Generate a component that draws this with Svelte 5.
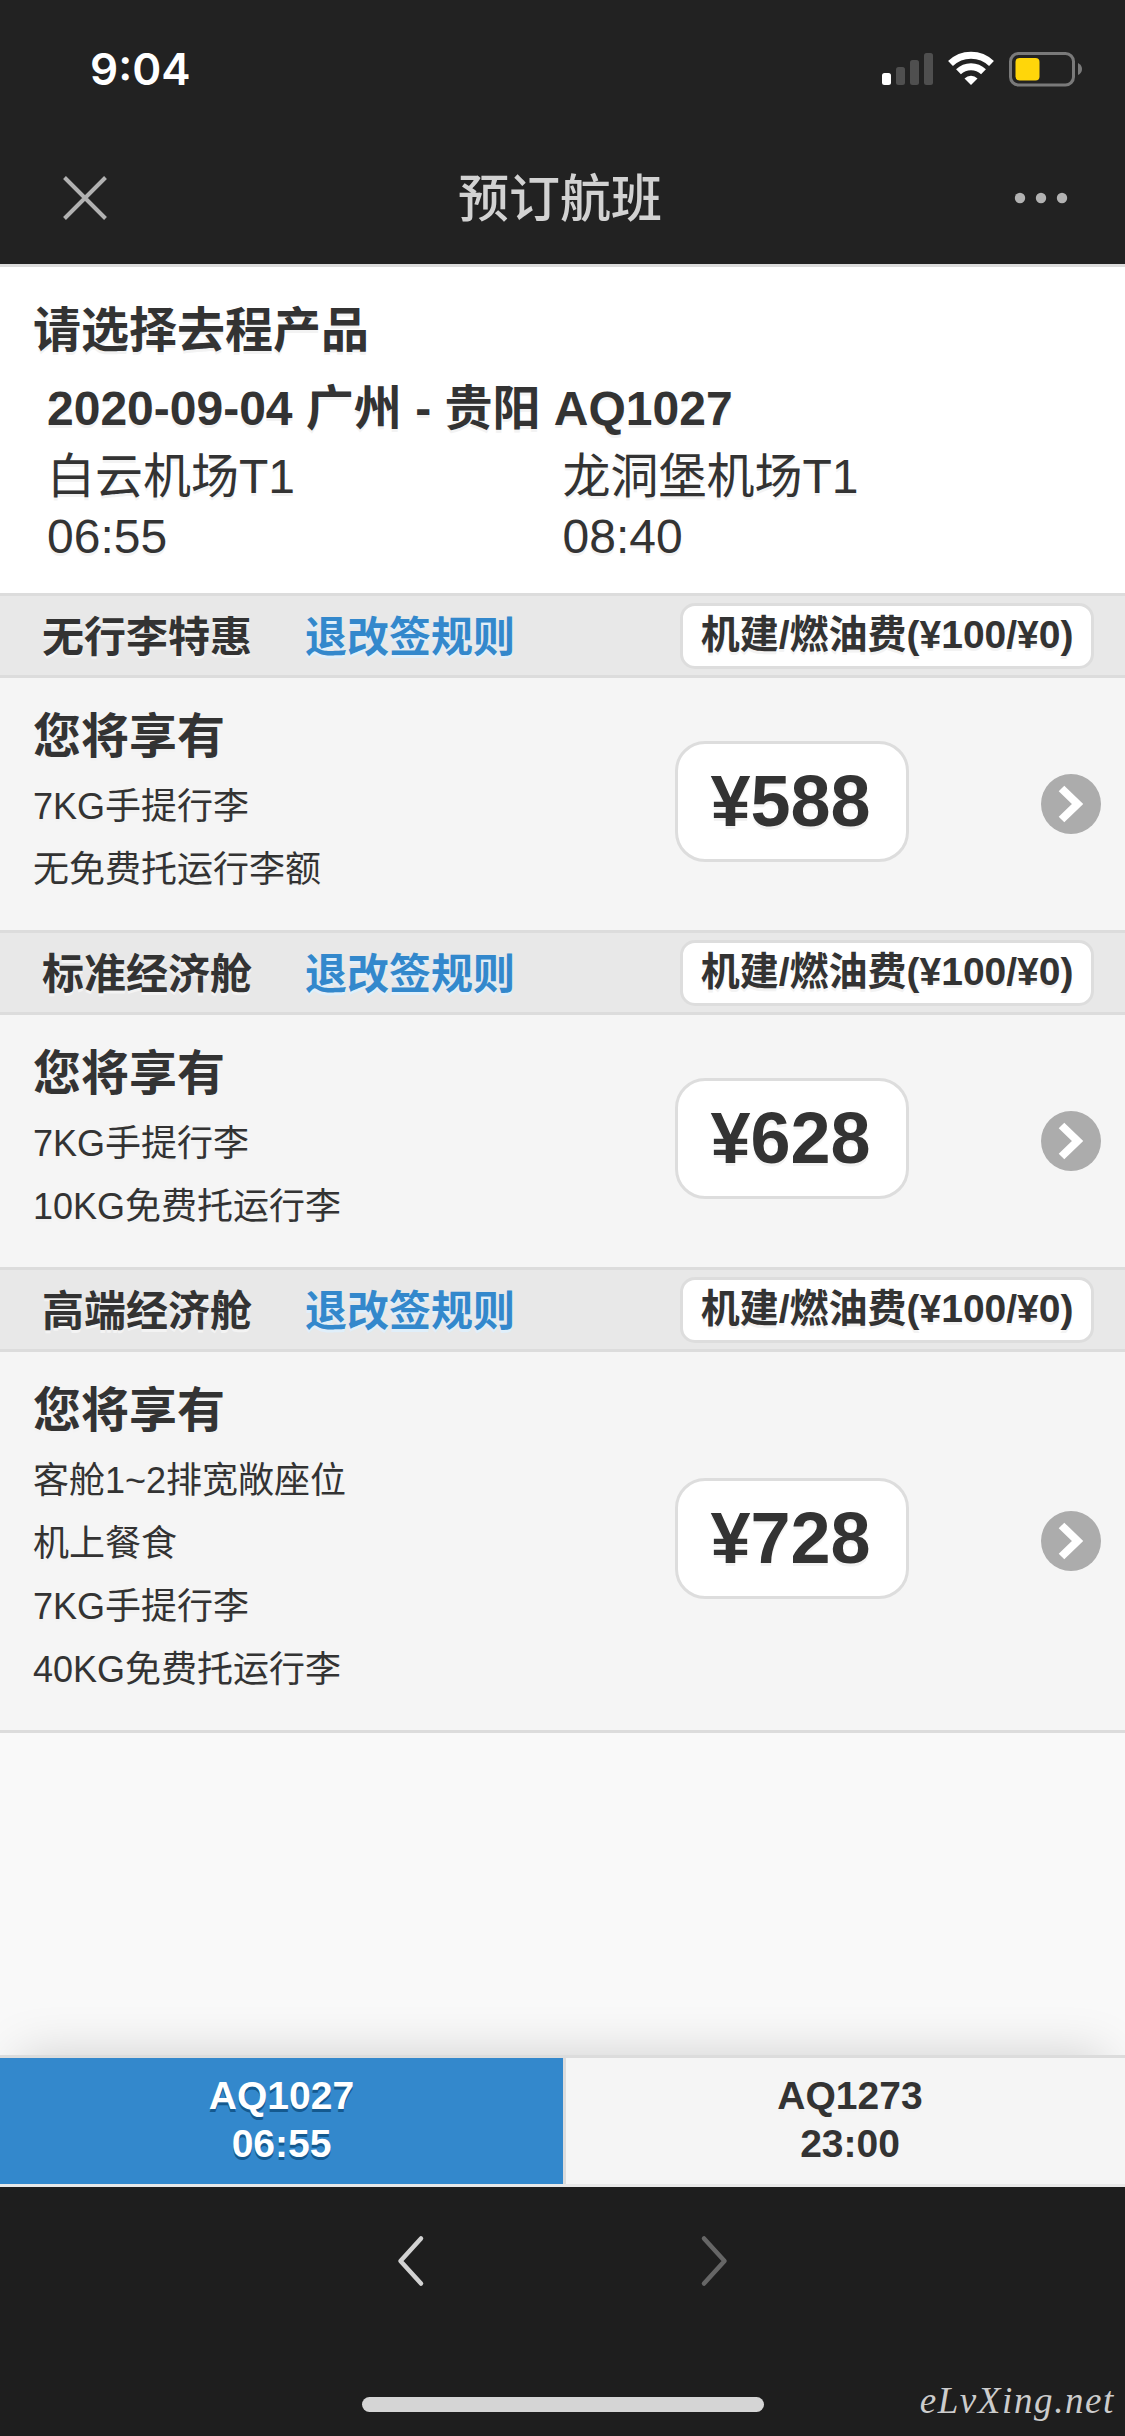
<script lang="ts">
  interface Product {
    name: string;
    price: number;
    benefits: string[];
  }

  const products: Product[] = [
    { name: "无行李特惠", price: 588, benefits: ["7KG手提行李", "无免费托运行李额"] },
    { name: "标准经济舱", price: 628, benefits: ["7KG手提行李", "10KG免费托运行李"] },
    {
      name: "高端经济舱",
      price: 728,
      benefits: ["客舱1~2排宽敞座位", "机上餐食", "7KG手提行李", "40KG免费托运行李"],
    },
  ];

  const stops = [
    { airport: "白云机场T1", time: "06:55" },
    { airport: "龙洞堡机场T1", time: "08:40" },
  ];

  const flights = [
    { no: "AQ1027", time: "06:55" },
    { no: "AQ1273", time: "23:00" },
  ];

  let selected = $state("AQ1027");
</script>

<div class="screen">
  <header>
    <div class="status">
      <span class="clock">9:04</span>
      <svg class="indicators" width="204" height="40" viewBox="0 0 204 40">
        <rect x="1" y="23" width="9" height="12" rx="2.5" fill="#fff" />
        <g fill="#4f4f4f">
          <rect x="15" y="17" width="9" height="18" rx="2.5" />
          <rect x="29" y="10" width="9" height="25" rx="2.5" />
          <rect x="43" y="3" width="9" height="32" rx="2.5" />
        </g>
        <g fill="none" stroke="#fff" stroke-width="7">
          <path d="M69.500 13.500a29.500 29.500 0 0 1 41 0" />
          <path d="M77.500 21.800a18 18 0 0 1 25 0" />
        </g>
        <path d="M83.500 28.500a9.200 9.200 0 0 1 13 0l-6.500 6.500z" fill="#fff" />
        <rect x="129.500" y="3.500" width="63" height="31.500" rx="8" fill="none" stroke="#7a7a7a" stroke-width="3" />
        <rect x="134.500" y="8" width="24" height="22.500" rx="4" fill="#ffd60a" />
        <path d="M197 13q4 2 4 6t-4 6z" fill="#7a7a7a" />
      </svg>
    </div>
    <div class="titlebar">
      <svg width="46" height="46" viewBox="0 0 46 46">
        <path d="M2.500 2.500l41 41M43.500 2.500l-41 41" stroke="#b2b2b2" stroke-width="4" />
      </svg>
      <h1>预订航班</h1>
      <svg width="54" height="12" viewBox="0 0 54 12" fill="#b2b2b2">
        <circle cx="6" cy="6" r="5.200" />
        <circle cx="27" cy="6" r="5.200" />
        <circle cx="48" cy="6" r="5.200" />
      </svg>
    </div>
  </header>

  <main>
    <section class="summary">
      <h2>请选择去程产品</h2>
      <div class="trip">
        <h3>2020-09-04 广州 - 贵阳 AQ1027</h3>
        <div class="stops">
          {#each stops as stop (stop.airport)}
            <p>{stop.airport}<br />{stop.time}</p>
          {/each}
        </div>
      </div>
    </section>

    {#each products as product (product.name)}
      <section class="product">
        <div class="bar">
          <strong>{product.name}</strong>
          <a href="#rules">退改签规则</a>
          <span class="fee">机建/燃油费(¥100/¥0)</span>
        </div>
        <div class="detail">
          <div class="benefits">
            <h2>您将享有</h2>
            <ul>
              {#each product.benefits as benefit (benefit)}
                <li>{benefit}</li>
              {/each}
            </ul>
          </div>
          <span class="price">¥{product.price}</span>
          <svg class="go" width="60" height="60" viewBox="0 0 60 60">
            <circle cx="30" cy="30" r="30" fill="#acacac" />
            <path d="M20.500 14.500L36.500 30l-16 15.500" fill="none" stroke="#fff" stroke-width="8" />
          </svg>
        </div>
      </section>
    {/each}
  </main>

  <nav class="flights">
    {#each flights as flight (flight.no)}
      <button
        class:active={flight.no === selected}
        onclick={() => (selected = flight.no)}
        type="button"
      >
        {flight.no}<br />{flight.time}
      </button>
    {/each}
  </nav>

  <footer>
    <div class="history">
      <svg width="30" height="54" viewBox="0 0 30 54">
        <path d="M25 4.500L4.500 27 25 49.500" fill="none" stroke="#d2d2d2" stroke-width="4.500" stroke-linejoin="round" stroke-linecap="round" />
      </svg>
      <svg width="30" height="54" viewBox="0 0 30 54">
        <path d="M5 4.500L25.500 27 5 49.500" fill="none" stroke="#666" stroke-width="4.500" stroke-linejoin="round" stroke-linecap="round" />
      </svg>
    </div>
    <div class="home"></div>
    <span class="watermark">eLvXing.net</span>
  </footer>
</div>

<style>
  :global(body) {
    background: #1e1e1e;
  }

  .screen {
    display: flex;
    flex-direction: column;
    width: 1125px;
    height: 2436px;
    overflow: hidden;
    background: #f9f9f9;
    color: #333;
    font-family: "Liberation Sans", "Noto Sans CJK SC", sans-serif;
    font-size: 48px;
    line-height: 60px;
    text-shadow: 0 3px 0 #f3f3f3;
  }

  h1,
  h2,
  h3,
  p,
  ul {
    margin: 0;
    padding: 0;
    font-size: inherit;
  }

  svg {
    display: block;
    flex: none;
  }

  header {
    box-sizing: border-box;
    height: 264px;
    background: #222;
    text-shadow: none;
  }

  .status {
    display: flex;
    justify-content: space-between;
    height: 134px;
    padding: 50px 40px 0 90px;
    box-sizing: border-box;
  }

  .clock {
    color: #fff;
    font-family: Inter, sans-serif;
    font-size: 44px;
    font-weight: 600;
    line-height: 39px;
  }

  .titlebar {
    display: flex;
    align-items: center;
    justify-content: space-between;
    height: 128px;
    padding: 0 57px 0 62px;
  }

  h1 {
    padding: 0 2px 6px 0;
    color: #d2d2d2;
    font-family: "Noto Sans CJK SC", sans-serif;
    font-size: 51px;
    font-weight: 500;
  }

  main {
    flex: 1;
  }

  .summary {
    height: 329px;
    padding: 34px 33px 0;
    box-sizing: border-box;
    border-top: 3px solid #dcdcdc;
    background: #fff;
  }

  .trip {
    padding: 18px 14px 0;
  }

  .stops {
    display: grid;
    grid-template-columns: 1fr 1fr;
    padding-top: 8px;
  }

  .bar {
    display: flex;
    align-items: center;
    height: 79px;
    padding: 0 31px 0 42px;
    border: solid #dcdcdc;
    border-width: 3px 0;
    background: #e8e8e8;
    font-size: 42px;
  }

  .bar a {
    margin-left: 53px;
    color: #38c;
    font-weight: bold;
    text-decoration: none;
    text-shadow: 0 3px 0 #e0effa;
  }

  .bar strong,
  .bar a {
    padding-top: 4px;
  }

  .fee {
    margin-left: auto;
    padding: 0 17.5px 3px;
    border: 3px solid #ddd;
    border-radius: 15px;
    background: #fff;
    font-size: 39px;
    font-weight: bold;
    line-height: 57px;
  }

  .product:last-child {
    border-bottom: 3px solid #dcdcdc;
  }

  .detail {
    display: flex;
    align-items: center;
    padding: 29px 24px 29px 33px;
    background: #f5f5f5;
  }

  .benefits {
    flex: 1;
  }

  ul {
    margin-top: 8px;
    list-style: none;
    font-size: 36px;
    line-height: 63px;
  }

  .price {
    width: 228px;
    height: 115px;
    margin: 0 132px 5px 0;
    border: 3px solid #ddd;
    border-radius: 30px;
    background: #fff;
    font-size: 72px;
    font-weight: bold;
    line-height: 114px;
    text-align: center;
    text-indent: -3px;
  }

  .flights {
    display: flex;
    height: 126px;
    border: solid #dcdcdc;
    border-width: 3px 0;
    border-bottom-color: #e8e8e8;
    background: #f5f5f5;
    box-shadow: 0 -20px 50px -20px rgba(0, 0, 0, 0.17);
  }

  button {
    flex: 1;
    margin: 0;
    padding: 0 0 3px 9px;
    border: 0;
    background: none;
    color: inherit;
    font: bold 39px/48px "Liberation Sans", sans-serif;
    text-shadow: inherit;
  }

  button.active {
    flex: 0 0 566px;
    padding-left: 0;
    border-right: 3px solid #dcdcdc;
    background: #38c;
    color: #fff;
    text-shadow: 0 3px 0 #14598f;
  }

  footer {
    position: relative;
    height: 249px;
    background: #1e1e1e;
    text-shadow: none;
  }

  .history {
    display: flex;
    justify-content: center;
    gap: 273px;
    padding-top: 47px;
  }

  .home {
    width: 402px;
    height: 15px;
    margin: 109px auto 0;
    border-radius: 8px;
    background: #d5d5d5;
  }

  .watermark {
    position: absolute;
    right: 10px;
    bottom: 11px;
    color: #ccc;
    font-family: "Brush Script MT", "Liberation Serif", serif;
    font-size: 37px;
    font-style: italic;
    letter-spacing: 1.6px;
    line-height: 48px;
  }
</style>
